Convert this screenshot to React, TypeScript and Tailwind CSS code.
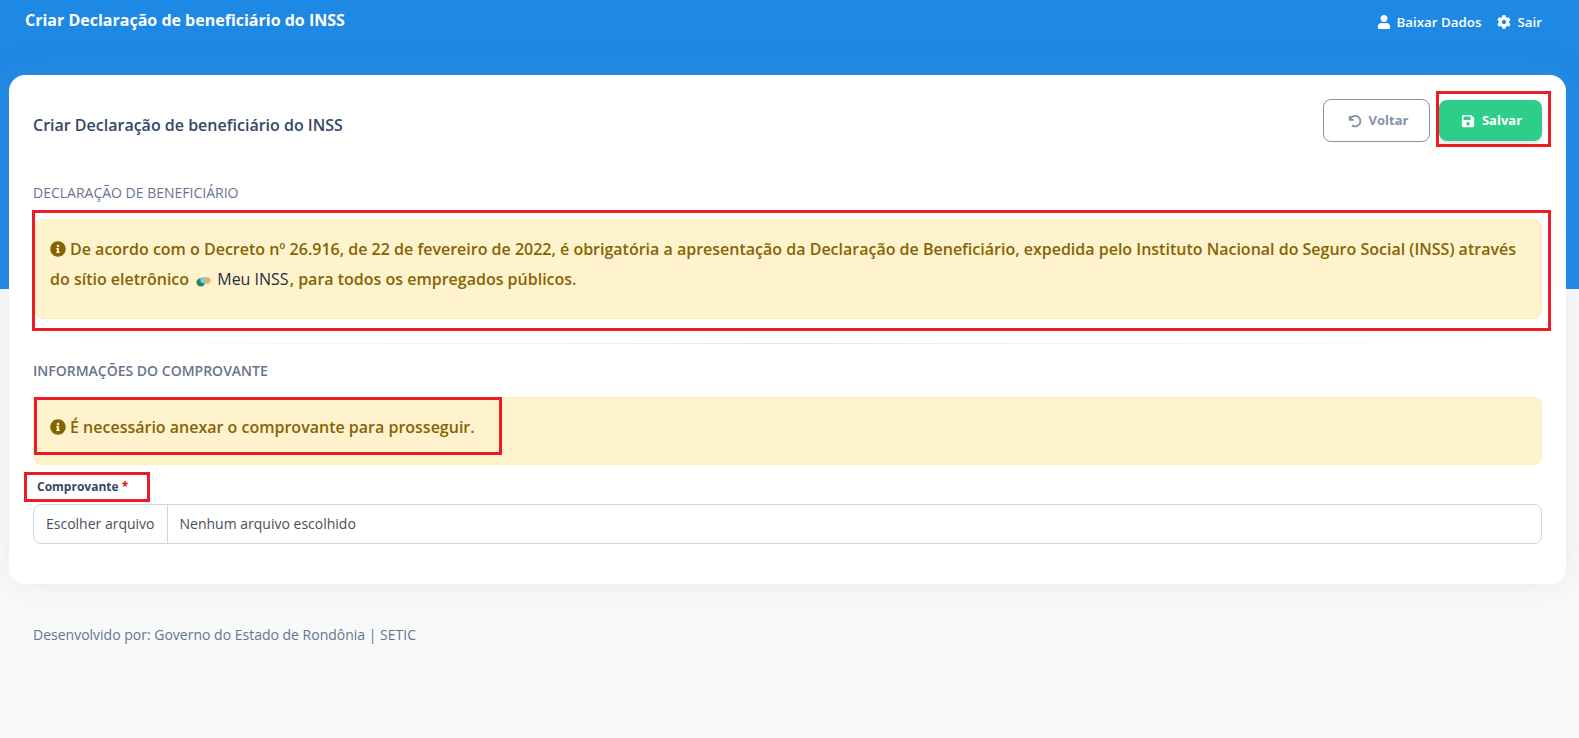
import React from 'react'

const InfoIcon = () => (
  <svg viewBox="0 0 512 512" className="inline-block w-4 h-4 mr-1 align-[-2px] fill-[#856404]">
    <path d="M256 8C119 8 8 119 8 256s111 248 248 248 248-111 248-248S393 8 256 8zm0 110c23 0 42 19 42 42s-19 42-42 42-42-19-42-42 19-42 42-42zm56 254c0 7-5 12-12 12h-88c-7 0-12-5-12-12v-24c0-7 5-12 12-12h12v-64h-12c-7 0-12-5-12-12v-24c0-7 5-12 12-12h64c7 0 12 5 12 12v100h12c7 0 12 5 12 12v24z" />
  </svg>
)

const UserIcon = () => (
  <svg viewBox="0 0 448 512" className="w-[14px] h-[14px] fill-white">
    <path d="M224 256c71 0 128-57 128-128S295 0 224 0 96 57 96 128s57 128 128 128zm90 32h-17c-22 10-47 16-73 16s-51-6-73-16h-17C60 288 0 348 0 422v42c0 27 21 48 48 48h352c27 0 48-21 48-48v-42c0-74-60-134-134-134z" />
  </svg>
)

const GearIcon = () => (
  <svg viewBox="0 0 512 512" className="w-[14px] h-[14px] fill-white">
    <path d="M487 316l-43-25c4-23 4-47 0-70l43-25c5-3 7-9 5-14-11-36-30-68-55-95-4-4-10-5-15-2l-43 25c-18-15-39-27-61-35V25c0-6-4-11-9-12-37-8-75-8-111 0-5 1-9 6-9 12v50c-22 8-43 20-61 35L85 85c-5-3-11-2-15 2-25 27-44 59-55 95-2 5 0 11 5 14l43 25c-4 23-4 47 0 70l-43 25c-5 3-7 9-5 14 11 36 30 68 55 95 4 4 10 5 15 2l43-25c18 15 39 27 61 35v50c0 6 4 11 9 12 37 8 75 8 111 0 5-1 9-6 9-12v-50c22-8 43-20 61-35l43 25c5 3 11 2 15-2 25-27 44-59 55-95 2-5 0-11-5-14zM256 336c-44 0-80-36-80-80s36-80 80-80 80 36 80 80-36 80-80 80z" />
  </svg>
)

const UndoIcon = () => (
  <svg viewBox="0 0 24 24" className="w-[14px] h-[14px] fill-none stroke-[#8392ab] stroke-[3.2]">
    <path d="M3 3v7h7" />
    <path d="M3.5 10A9 9 0 1 1 7 19.5" />
  </svg>
)

const SaveIcon = () => (
  <svg viewBox="0 0 448 512" className="w-[14px] h-[14px] fill-white">
    <path fillRule="evenodd" d="M434 130l-84-84c-9-9-21-14-34-14H48C21 32 0 53 0 80v352c0 27 21 48 48 48h352c27 0 48-21 48-48V164c0-13-5-25-14-34zM224 416c-35 0-64-29-64-64s29-64 64-64 64 29 64 64-29 64-64 64zM320 111v100c0 7-5 12-12 12H76c-7 0-12-5-12-12V107c0-7 5-12 12-12h228c9 0 16 7 16 16z" />
  </svg>
)

const InssLogo = () => (
  <svg viewBox="0 0 16 13" className="inline-block w-[15px] h-3 ml-[3px] mr-[6px] align-[-2px]">
    <ellipse cx="11.5" cy="6" rx="4.2" ry="3.6" fill="#f0b04a" />
    <ellipse cx="5" cy="8" rx="4.6" ry="4.4" fill="#1f8a5b" />
    <ellipse cx="8" cy="5.5" rx="3.4" ry="3.4" fill="#8fc6dc" />
  </svg>
)

// red annotation rectangles sitting on top of the screenshot
const Mark = ({ className }: { className: string }) => (
  <div className={`absolute border-[3px] border-[#ed1c24] pointer-events-none ${className}`} />
)

export default function App() {
  return (
    <div className="relative min-h-[738px] bg-[#f8f9fa] font-['Open_Sans',sans-serif] overflow-hidden">
      <div className="h-[289px] bg-[#1e88e5] pl-[25px] pt-[8px] pr-[37px] flex justify-between items-start text-white">
        <h1 className="text-base font-bold leading-[24px]">Criar Declaração de beneficiário do INSS</h1>
        <div className="flex items-center gap-4 text-[13.33px] font-semibold leading-[24px] pt-[2px]">
          <span className="flex items-center gap-[6px]"><UserIcon /> Baixar Dados</span>
          <span className="flex items-center gap-[6px]"><GearIcon /> Sair</span>
        </div>
      </div>

      <div className="mt-[-214px] ml-[9px] mr-[13px] bg-white rounded-2xl px-6 pt-6 pb-[40px] shadow-[0_0_32px_0_rgba(136,152,170,0.15)]">
        <div className="flex items-center justify-between h-[43px]">
          <h2 className="text-base font-semibold text-[#344767] pt-[8px]">Criar Declaração de beneficiário do INSS</h2>
          <div className="flex items-center gap-[9px]">
            <button className="w-[107px] h-[43px] rounded-lg border border-[#8392ab] flex items-center justify-center gap-[7px] text-[13px] font-bold text-[#8392ab] pl-[3px]">
              <UndoIcon /> Voltar
            </button>
            <button className="w-[103px] h-[41px] rounded-lg bg-[#2dce89] flex items-center justify-center gap-[7px] text-[13px] font-bold text-white shadow-[0_3px_5px_rgba(0,0,0,0.12)] pl-[2px]">
              <SaveIcon /> Salvar
            </button>
          </div>
        </div>

        <h3 className="mt-[41px] text-sm leading-[20px] text-[#67748e]">DECLARAÇÃO DE BENEFICIÁRIO</h3>
        <div className="mt-[16px] ml-[2px] h-[100px] rounded-lg bg-[#fff3cd] border border-[#ffeeba] pl-[14px] pr-[15px] pt-[14px] text-base leading-[30px] font-semibold text-[#856404]">
          <p>
            <InfoIcon />De acordo com o Decreto nº 26.916, de 22 de fevereiro de 2022, é obrigatória a apresentação da Declaração de Beneficiário, expedida pelo Instituto Nacional do Seguro Social (INSS) através do sítio eletrônico <InssLogo /><span className="text-[#1f2d45] font-medium">Meu INSS</span><span className="ml-[1px]">, para todos os empregados públicos.</span>
          </p>
        </div>

        <div className="mt-[24px] h-px bg-gradient-to-r from-transparent via-[#e6e8ec] to-transparent" />

        <h3 className="mt-[17px] text-sm leading-[20px] font-semibold text-[#67748e]">INFORMAÇÕES DO COMPROVANTE</h3>
        <div className="mt-[16px] h-[68px] rounded-lg bg-[#fff3cd] border border-[#ffeeba] pl-[16px] pr-[15px] flex items-center text-base font-semibold text-[#856404] pb-[9px]">
          <p><InfoIcon />É necessário anexar o comprovante para prosseguir.</p>
        </div>

        <label className="block mt-[14px] ml-1 text-xs leading-[16px] font-bold text-[#344767]">
          Comprovante <span className="text-[#ea0606]">*</span>
        </label>
        <div className="mt-[9px] h-[40px] rounded-lg border border-[#d2d6da] flex items-center text-sm text-[#495057]">
          <span className="h-full px-3 flex items-center border-r border-[#d2d6da]">Escolher arquivo</span>
          <span className="px-3">Nenhum arquivo escolhido</span>
        </div>
      </div>

      <p className="mt-[41px] ml-[33px] text-sm leading-[20px] text-[#67748e]">Desenvolvido por: Governo do Estado de Rondônia | SETIC</p>

      <Mark className="left-[1436px] top-[91px] w-[115px] h-[56px]" />
      <Mark className="left-[32px] top-[210px] w-[1519px] h-[121px]" />
      <Mark className="left-[34px] top-[397px] w-[468px] h-[58px]" />
      <Mark className="left-[24px] top-[472px] w-[126px] h-[30px]" />
    </div>
  )
}
